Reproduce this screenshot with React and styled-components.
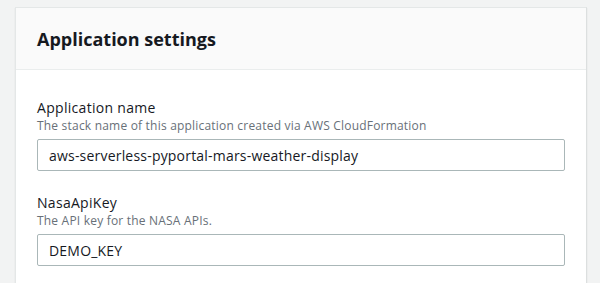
import React from "react";
import styled, { createGlobalStyle } from "styled-components";

const Global = createGlobalStyle`
  html, body { margin: 0; padding: 0; background: #f2f3f3; }
  body { font-family: "Open Sans", "Liberation Sans", sans-serif; color: #16191f; }
`;

const Page = styled.div`
  height: 283px;
  overflow: hidden;
  padding: 7px 13px 0 15px;
  box-sizing: border-box;
`;

const Card = styled.section`
  background: #fff;
  border: 1px solid #e4e7e7;
  border-right-color: #dcdfdf;
  box-shadow: 0 1px 1px rgba(0, 28, 36, 0.12);
  min-height: 300px;
`;

const Header = styled.header`
  background: #fafafa;
  border-bottom: 1px solid #eaeded;
  height: 61px;
  display: flex;
  align-items: center;
  padding: 0 21px;
`;

const Title = styled.h2`
  margin: 0;
  font-size: 18px;
  font-weight: 700;
  line-height: 22px;
  letter-spacing: 0;
`;

const Body = styled.div`
  padding: 28px 21px 20px 21px;
  display: flex;
  flex-direction: column;
  gap: 22px;
`;

const Field = styled.div`
  display: flex;
  flex-direction: column;
`;

const Label = styled.label`
  font-size: 14px;
  line-height: 20px;
  letter-spacing: 0.3px;
`;

const Desc = styled.div`
  font-size: 12px;
  line-height: 16px;
  color: #687078;
  margin-bottom: 5px;
  letter-spacing: 0.2px;
`;

const Input = styled.div`
  height: 30px;
  border: 1px solid #aab7b8;
  border-radius: 2px;
  display: flex;
  align-items: center;
  padding: 0 11px;
  font-size: 14px;
  letter-spacing: 0.2px;
  color: #16191f;
`;

const fields = [
  {
    label: "Application name",
    desc: "The stack name of this application created via AWS CloudFormation",
    value: "aws-serverless-pyportal-mars-weather-display",
  },
  {
    label: "NasaApiKey",
    desc: "The API key for the NASA APIs.",
    value: "DEMO_KEY",
  },
];

export default function App() {
  return (
    <>
      <Global />
      <Page>
        <Card>
          <Header>
            <Title>Application settings</Title>
          </Header>
          <Body>
            {fields.map((f) => (
              <Field key={f.label}>
                <Label>{f.label}</Label>
                <Desc>{f.desc}</Desc>
                <Input>{f.value}</Input>
              </Field>
            ))}
          </Body>
        </Card>
      </Page>
    </>
  );
}
